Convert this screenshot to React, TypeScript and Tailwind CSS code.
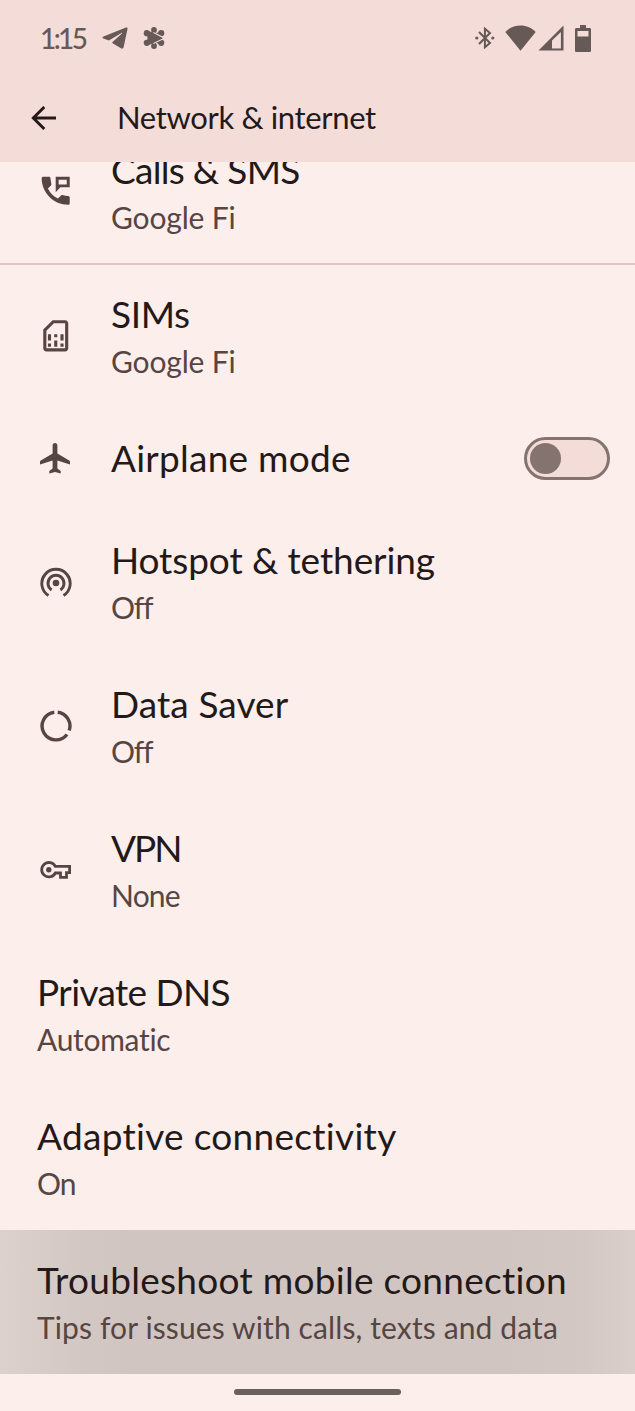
import React from 'react';
import { MdOutlineSimCard } from 'react-icons/md';
import clsx from 'clsx';

interface SettingItem {
  title: string;
  subtitle?: string;
  icon?: React.ReactNode;
  titleClass?: string;
  subtitleClass?: string;
}

const PhoneMessageIcon = () => (
  <svg viewBox="0 0 24 24" className="size-[37.4px]" fill="currentColor">
    <path d="M20 15.4c-1.23 0-2.42-.2-3.53-.56-.35-.12-.74-.03-1.01.24l-2 1.97c-2.83-1.35-5.05-3.5-6.46-6.43l1.95-1.96c.27-.28.35-.67.24-1.02L8.6 3.8c-.1-.5-.4-.8-1-.8H4c-.6 0-1 .4-1 1 0 9.3 7.7 17 17 17 .6 0 1-.4 1-1v-3.6c0-.6-.4-.9-1-1z" />
    <path fillRule="evenodd" d="M12 3v10l3-3.2h6V3zm1.9 1.9h5.2v3.1h-5.2z" />
  </svg>
);

const AirplaneIcon = () => (
  <svg viewBox="0 0 30 31" className="mr-0.5 h-[31px] w-[30px]" fill="currentColor">
    <path d="M15 0c-1.500 0-2.400 1-2.400 2.400v8L.8 17.600c-.5.3-.8.800-.8 1.300v2.600l12.600-3.900v7.800l-3.300 2.500v2.700L15 29l5.700 1.600v-2.700l-3.300-2.500v-7.800L30 21.500v-2.600c0-.5-.3-1-.8-1.300l-11.800-7.200v-8C17.400 1 16.500 0 15 0z" />
  </svg>
);

const HotspotIcon = () => (
  <svg viewBox="-16 -16 32 32" className="mt-0.5 size-8" fill="none" stroke="currentColor" strokeWidth="2.9">
    <circle r="3.3" fill="currentColor" stroke="none" />
    <path d="M-7.5 12.5A14.2 14.2 0 1 1 7.5 12.5" />
    <path d="M-4.4 7A8 8 0 1 1 4.4 7" />
  </svg>
);

const DataSaverIcon = () => (
  <svg viewBox="-16 -16 32 32" className="size-8" fill="none" stroke="currentColor" strokeWidth="3.4">
    <path d="M1.7-13.8A13.9 13.9 0 0 1 13.2 4.5" />
    <path d="M11 8.5A13.9 13.9 0 1 1-1.7-13.8" />
  </svg>
);

const KeyIcon = () => (
  <svg viewBox="0 0 31 18" className="mt-px h-[18px] w-[31px]" fill="none" stroke="currentColor" strokeWidth="2.8">
    <path d="M15.3 5.4H29.6V11.700H26.500V16.300H20.500V12H15.300A7.200 7.200 0 1 1 15.300 5.400z" />
    <circle cx="8.800" cy="8.700" r="2.700" fill="currentColor" stroke="none" />
  </svg>
);

const items: SettingItem[] = [
  { title: 'SIMs', subtitle: 'Google Fi', icon: <MdOutlineSimCard className="size-[37.5px]" />, titleClass: 'tracking-[-0.4px]', subtitleClass: 'tracking-[-0.15px]' },
  { title: 'Airplane mode', icon: <AirplaneIcon />, titleClass: 'tracking-[0.25px]' },
  { title: 'Hotspot & tethering', subtitle: 'Off', icon: <HotspotIcon />, titleClass: 'tracking-[-0.1px]', subtitleClass: 'tracking-[-1.2px]' },
  { title: 'Data Saver', subtitle: 'Off', icon: <DataSaverIcon />, titleClass: 'tracking-[0.1px]', subtitleClass: 'tracking-[-1.2px]' },
  { title: 'VPN', subtitle: 'None', icon: <KeyIcon />, titleClass: 'tracking-[-2px]', subtitleClass: 'tracking-[-0.8px]' },
  { title: 'Private DNS', subtitle: 'Automatic', titleClass: 'tracking-[-0.6px]', subtitleClass: 'tracking-[-0.3px]' },
  { title: 'Adaptive connectivity', subtitle: 'On', titleClass: 'tracking-[0.3px]', subtitleClass: 'tracking-[-1px]' },
];

const Labels = ({ title, subtitle, titleClass, subtitleClass }: SettingItem) => (
  <div className="flex-1 whitespace-nowrap">
    <div className={clsx('text-[37px] leading-[48px] text-[#231918]', titleClass)}>{title}</div>
    {subtitle && (
      <div className={clsx('text-[30px] leading-[46px] text-[#574543]', subtitleClass)}>{subtitle}</div>
    )}
  </div>
);

const Toggle = () => (
  <button
    type="button"
    role="switch"
    aria-checked="false"
    className="mr-[25px] flex h-[43px] w-[86px] items-center rounded-full border-[3px] border-[#85736f] bg-[#f4dcd8] pl-[3px]"
  >
    <span className="size-[31px] rounded-full bg-[#85736f]" />
  </button>
);

const SettingRow = ({ item }: { item: SettingItem }) => (
  <div
    className={clsx(
      'flex shrink-0',
      item.subtitle ? 'h-36 pt-[26px]' : 'h-[102px] items-center pb-0.5',
      !item.icon && 'pl-[37px]'
    )}
  >
    {item.icon && (
      <div className={clsx('flex w-[111px] items-center justify-center text-[#574543]', item.subtitle && 'h-[91px]')}>
        {item.icon}
      </div>
    )}
    <Labels {...item} />
    {item.title === 'Airplane mode' && <Toggle />}
  </div>
);

const StatusBar = () => (
  <div className="flex h-[76px] items-center text-[#665956]">
    <span className="ml-10 w-[62px] text-[28px] font-medium tracking-[-2.6px]">1:15</span>
    <svg viewBox="0 0 26 22" className="h-[22px] w-[26px]" fill="currentColor">
      <path d="M24 .6 1.500 9.400c-1.300.5-1.200 1.700 0 2.200l5.300 1.900L19.500 5.900c.7-.4 1 .1.500.6L10.500 15l-.3.900 8.700 5.400c1.300.8 2.300.3 2.700-1L25.500 2c.3-1.300-.4-1.900-1.500-1.400z" />
    </svg>
    <svg viewBox="-11 -11 22 22" className="ml-[15px] size-[22px]">
      <g fill="currentColor">
        <path d="M-7.500-7.500-1-5.500 0-9 2-5 8-6.500 6.500-2 9.500 0 6.500 2 8 6.500 2 5 0 9-1 5.500-7.500 7.500-6.500 0z" />
        <circle cy="-8" r="2.900" />
        <circle cy="8" r="2.900" />
        <circle cx="-7.200" cy="-4.800" r="3.100" />
        <circle cx="7.200" cy="-4.800" r="3.100" />
        <circle cx="-7.200" cy="4.800" r="3.100" />
        <circle cx="7.200" cy="4.800" r="3.100" />
      </g>
      <path d="M-.5-5.500 10.500.2-.5 5.500" fill="none" stroke="#f4dcd8" strokeWidth="1.100" />
    </svg>
    <svg viewBox="0 0 20 22" className="ml-auto h-[22px] w-5" fill="none" stroke="currentColor" strokeWidth="2">
      <path d="M4 5 15 16 9.900 20.300V1.700L15 6 4 17" />
      <circle cx="1.800" cy="11" r="1.600" fill="currentColor" stroke="none" />
      <circle cx="17.800" cy="11" r="1.600" fill="currentColor" stroke="none" />
    </svg>
    <svg viewBox="0 0 31 26" className="ml-2.5 h-[26px] w-[31px]" fill="currentColor">
      <path d="M15.500 25.700.3 7C4.300 2.800 9.600.5 15.500.5S26.700 2.800 30.700 7z" />
    </svg>
    <svg viewBox="0 0 26 26" className="ml-0.5 size-[26px]">
      <path fill="currentColor" fillRule="evenodd" d="M25.500.5v25H.5zM22.900 7 14 15.500v7.900h8.900z" />
    </svg>
    <svg viewBox="0 0 16 27" className="mr-11 ml-[11px] h-[27px] w-4">
      <path fill="currentColor" fillRule="evenodd" d="M5 0h6v3h3.500c1 0 1.500.6 1.500 1.500v21c0 1-.6 1.500-1.500 1.500h-13C.6 27 0 26.500 0 25.500v-21C0 3.600.6 3 1.500 3H5zM2.500 6v5.500h11V6z" />
    </svg>
  </div>
);

export default function App() {
  return (
    <div className="flex h-[1411px] w-[635px] flex-col overflow-hidden bg-[#fceeeb] font-['Lato',sans-serif] [font-variant-ligatures:none]">
      <header className="h-[162px] shrink-0 bg-[#f4dcd8]">
        <StatusBar />
        <div className="flex h-[84px] items-center text-[#231918]">
          <svg viewBox="0 0 26 24" className="ml-[31px] h-6 w-[26px]" fill="none" stroke="currentColor" strokeWidth="2.9">
            <path d="M25 12H2M13.300 1 2.300 12l11 11" />
          </svg>
          <h1 className="ml-[60px] pb-px text-[31px] tracking-[-0.35px]">Network &amp; internet</h1>
        </div>
      </header>

      <main className="flex flex-col">
        {/* First row is scrolled partly under the header */}
        <div className="-mb-px flex h-[103px] shrink-0 items-end overflow-hidden border-b-2 border-[#dcc5c3]">
          <div className="flex h-[143px] shrink-0 pt-[26px]">
            <div className="flex h-[91px] w-[111px] items-center justify-center pb-0.5 text-[#574543]">
              <PhoneMessageIcon />
            </div>
            <Labels title="Calls & SMS" subtitle="Google Fi" titleClass="tracking-[-0.7px]" subtitleClass="tracking-[-0.15px]" />
          </div>
        </div>

        {items.map((item) => (
          <SettingRow key={item.title} item={item} />
        ))}

        {/* Pressed row */}
        <div className="flex h-36 bg-[linear-gradient(to_right,#ddd1cd,#d4c8c5_12%,#d1c5c1_20%,#d1c5c1_80%,#d4c8c5_92%,#dbcfcb)] pt-[26px] pl-[37px]">
          <Labels
            title="Troubleshoot mobile connection"
            subtitle="Tips for issues with calls, texts and data"
            titleClass="tracking-[0.28px]"
            subtitleClass="tracking-[0.12px]"
          />
        </div>
      </main>

      <div className="mx-auto mt-[15px] h-[6px] w-[167px] rounded-full bg-[#6a615d]" />
    </div>
  );
}
